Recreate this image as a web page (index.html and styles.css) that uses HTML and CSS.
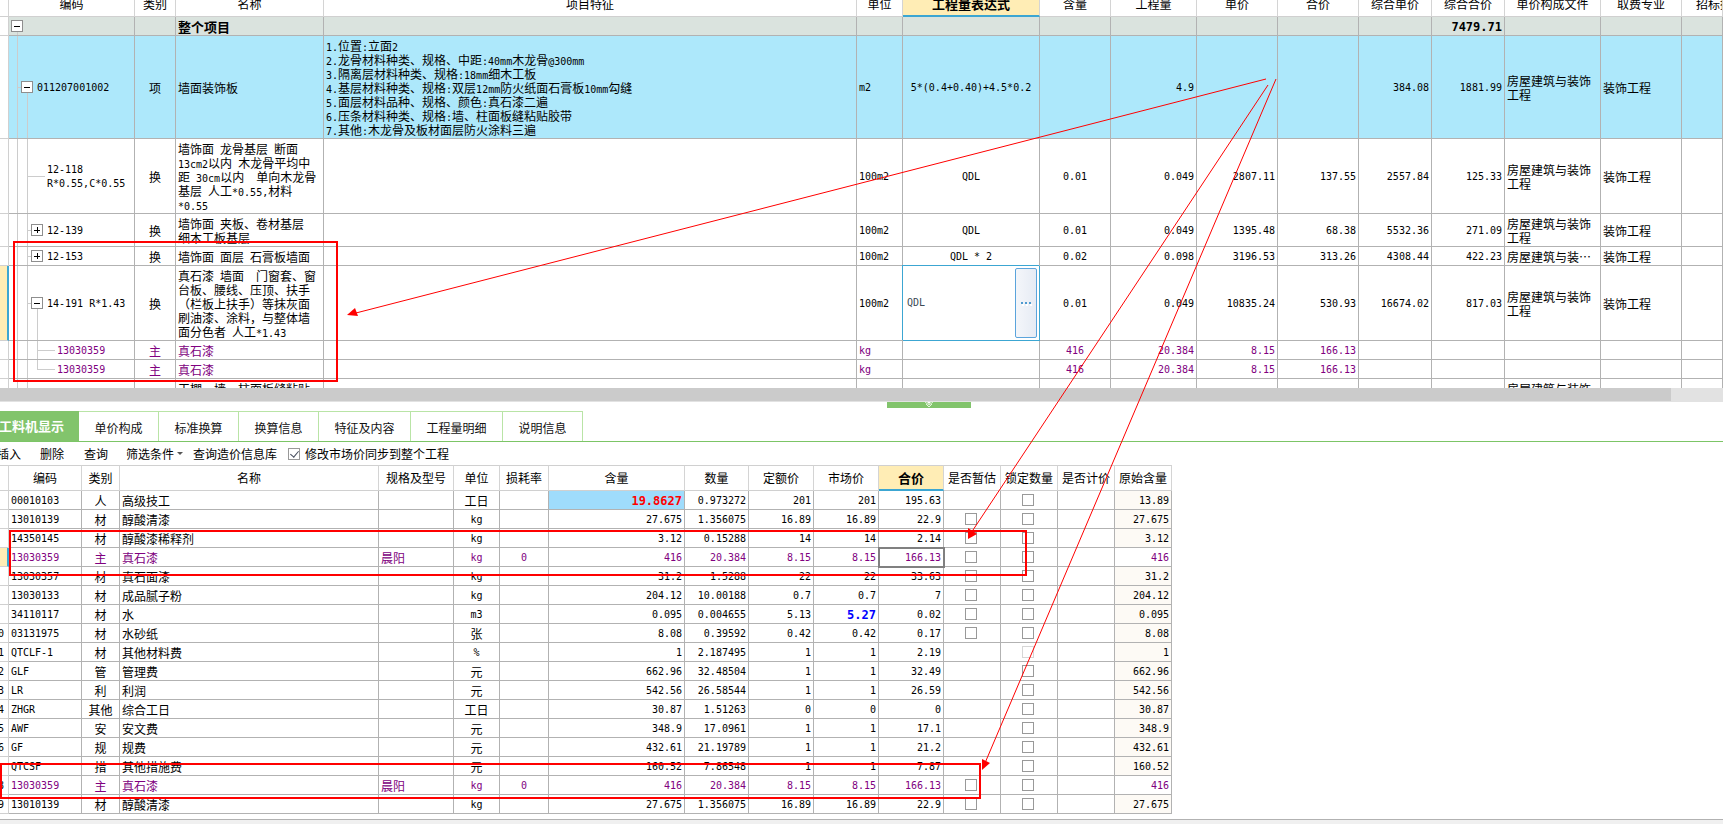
FILE: index.html
```html
<!DOCTYPE html>
<html lang="zh-CN">
<head>
<meta charset="utf-8">
<title>工料机显示</title>
<link rel="stylesheet" href="styles.css">
</head>
<body>
<main class="page">
<section class="bill-pane">
<table class="grid bill">
<colgroup><col class="b0"><col class="b1"><col class="b2"><col class="b3"><col class="b4"><col class="b5"><col class="b6"><col class="b7"><col class="b8"><col class="b9"><col class="b9"><col class="b10"><col class="b10"><col class="b11"><col class="b9"><col></colgroup>
<thead><tr><th></th><th>编码</th><th>类别</th><th>名称</th><th>项目特征</th><th>单位</th><th class="active">工程量表达式</th><th>含量</th><th>工程量</th><th>单价</th><th>合价</th><th>综合单价</th><th>综合合价</th><th>单价构成文件</th><th>取费专业</th><th class="cut">招标控制价</th></tr></thead>
<tbody>
<tr class="h-line total"><td></td><td class="tree root"><button class="toggle minus" aria-label="折叠"></button></td><td></td><td class="c">整个项目</td><td></td><td></td><td></td><td></td><td></td><td></td><td></td><td></td><td>7479.71</td><td></td><td></td><td></td></tr>
<tr class="h-item item"><td></td><td class="tree lv1"><button class="toggle minus" aria-label="折叠"></button><span>011207001002</span></td><td class="c">项</td><td class="c">墙面装饰板</td><td class="c"><span class="n">1.</span>位置<span class="n">:</span>立面<span class="n">2</span><br><span class="n">2.</span>龙骨材料种类、规格、中距<span class="n">:40mm</span>木龙骨<span class="n">@300mm</span><br><span class="n">3.</span>隔离层材料种类、规格<span class="n">:18mm</span>细木工板<br><span class="n">4.</span>基层材料种类、规格<span class="n">:</span>双层<span class="n">12mm</span>防火纸面石膏板<span class="n">10mm</span>勾缝<br><span class="n">5.</span>面层材料品种、规格、颜色<span class="n">:</span>真石漆二遍<br><span class="n">6.</span>压条材料种类、规格<span class="n">:</span>墙、柱面板缝粘贴胶带<br><span class="n">7.</span>其他<span class="n">:</span>木龙骨及板材面层防火涂料三遍</td><td>m2</td><td>5*(0.4+0.40)+4.5*0.2</td><td></td><td>4.9</td><td></td><td></td><td>384.08</td><td>1881.99</td><td class="c">房屋建筑与装饰<br>工程</td><td class="c">装饰工程</td><td></td></tr>
<tr class="h-tall"><td></td><td class="tree lv2 leaf"><span>12-118<br>R*0.55,C*0.55</span></td><td class="c">换</td><td class="c">墙饰面<span class="n"> </span>龙骨基层<span class="n"> </span>断面<br><span class="n">13cm2</span>以内<span class="n"> </span>木龙骨平均中<br>距<span class="n"> 30cm</span>以内<span class="n">&nbsp; </span>单向木龙骨<br>基层<span class="n"> </span>人工<span class="n">*0.55,</span>材料<br><span class="n">*0.55</span></td><td></td><td>100m2</td><td>QDL</td><td>0.01</td><td>0.049</td><td>2807.11</td><td>137.55</td><td>2557.84</td><td>125.33</td><td class="c">房屋建筑与装饰<br>工程</td><td class="c">装饰工程</td><td></td></tr>
<tr class="h-two"><td></td><td class="tree lv2"><button class="toggle plus" aria-label="展开"></button><span>12-139</span></td><td class="c">换</td><td class="c">墙饰面<span class="n"> </span>夹板、卷材基层<br>细木工板基层</td><td></td><td>100m2</td><td>QDL</td><td>0.01</td><td>0.049</td><td>1395.48</td><td>68.38</td><td>5532.36</td><td>271.09</td><td class="c">房屋建筑与装饰<br>工程</td><td class="c">装饰工程</td><td></td></tr>
<tr class="h-line"><td></td><td class="tree lv2"><button class="toggle plus" aria-label="展开"></button><span>12-153</span></td><td class="c">换</td><td class="c">墙饰面<span class="n"> </span>面层<span class="n"> </span>石膏板墙面</td><td></td><td>100m2</td><td>QDL * 2</td><td>0.02</td><td>0.098</td><td>3196.53</td><td>313.26</td><td>4308.44</td><td>422.23</td><td class="c">房屋建筑与装…</td><td class="c">装饰工程</td><td></td></tr>
<tr class="h-tall current"><td></td><td class="tree lv2 open"><button class="toggle minus" aria-label="折叠"></button><span>14-191 R*1.43</span></td><td class="c">换</td><td class="c">真石漆<span class="n"> </span>墙面<span class="n">&nbsp; </span>门窗套、窗<br>台板、腰线、压顶、扶手<br>（栏板上扶手）等抹灰面<br>刷油漆、涂料，与整体墙<br>面分色者<span class="n"> </span>人工<span class="n">*1.43</span></td><td></td><td>100m2</td><td class="editing"><div class="editor"><input type="text" value="QDL" aria-label="工程量表达式"><button aria-label="编辑表达式"><i></i><i></i><i></i></button></div></td><td>0.01</td><td>0.049</td><td>10835.24</td><td>530.93</td><td>16674.02</td><td>817.03</td><td class="c">房屋建筑与装饰<br>工程</td><td class="c">装饰工程</td><td></td></tr>
<tr class="h-line main"><td></td><td class="tree lv3"><span>13030359</span></td><td class="c">主</td><td class="c">真石漆</td><td></td><td>kg</td><td></td><td>416</td><td>20.384</td><td>8.15</td><td>166.13</td><td></td><td></td><td></td><td></td><td></td></tr>
<tr class="h-line main"><td></td><td class="tree lv3 last"><span>13030359</span></td><td class="c">主</td><td class="c">真石漆</td><td></td><td>kg</td><td></td><td>416</td><td>20.384</td><td>8.15</td><td>166.13</td><td></td><td></td><td></td><td></td><td></td></tr>
<tr class="h-two"><td></td><td class="tree guides"></td><td></td><td class="c">工棚、墙、柱面板缝粘贴<br>胶带</td><td></td><td></td><td></td><td></td><td></td><td></td><td></td><td></td><td></td><td class="c">房屋建筑与装饰<br>工程</td><td></td><td></td></tr>
</tbody>
</table>
</section>
<div class="scrollbar"><div class="thumb"></div></div>
<div class="splitter"><button aria-label="收起"><svg width="10" height="6" viewBox="0 0 10 6"><path d="M1 0l4 3 4-3M2 2l3 3 3-3" fill="none" stroke="#e4f4dc" stroke-width="1"/><path d="M3 0h4l-2 2z" fill="#fff"/></svg></button></div>
<nav class="tabs"><button class="tab on">工料机显示</button><button class="tab">单价构成</button><button class="tab">标准换算</button><button class="tab">换算信息</button><button class="tab wide">特征及内容</button><button class="tab wide">工程量明细</button><button class="tab">说明信息</button></nav>
<div class="tools"><button class="first">插入</button><button class="second">删除</button><button class="third">查询</button><button class="filter">筛选条件<i class="caret"></i></button><button class="lookup">查询造价信息库</button><label><input type="checkbox" checked>修改市场价同步到整个工程</label></div>
<section class="res-pane">
<table class="grid res">
<colgroup><col class="r0"><col class="r1"><col class="r2"><col class="r3"><col class="r4"><col class="r5"><col class="r6"><col class="r7"><col class="r8"><col class="r9"><col class="r9"><col class="r9"><col class="r10"><col class="r10"><col class="r10"><col class="r10"></colgroup>
<thead><tr><th></th><th>编码</th><th>类别</th><th>名称</th><th>规格及型号</th><th>单位</th><th>损耗率</th><th>含量</th><th>数量</th><th>定额价</th><th>市场价</th><th class="active">合价</th><th>是否暂估</th><th>锁定数量</th><th>是否计价</th><th>原始含量</th></tr></thead>
<tbody>
<tr><td></td><td>00010103</td><td class="c">人</td><td class="c">高级技工</td><td></td><td class="c">工日</td><td></td><td class="changed">19.8627</td><td>0.973272</td><td>201</td><td>201</td><td>195.63</td><td></td><td><input type="checkbox" aria-label="锁定数量"></td><td></td><td>13.89</td></tr>
<tr><td></td><td>13010139</td><td class="c">材</td><td class="c">醇酸清漆</td><td></td><td>kg</td><td></td><td>27.675</td><td>1.356075</td><td>16.89</td><td>16.89</td><td>22.9</td><td><input type="checkbox" aria-label="是否暂估"></td><td><input type="checkbox" aria-label="锁定数量"></td><td></td><td>27.675</td></tr>
<tr><td></td><td>14350145</td><td class="c">材</td><td class="c">醇酸漆稀释剂</td><td></td><td>kg</td><td></td><td>3.12</td><td>0.15288</td><td>14</td><td>14</td><td>2.14</td><td><input type="checkbox" aria-label="是否暂估"></td><td><input type="checkbox" aria-label="锁定数量"></td><td></td><td>3.12</td></tr>
<tr class="main current"><td></td><td>13030359</td><td class="c">主</td><td class="c">真石漆</td><td class="c">晨阳</td><td>kg</td><td>0</td><td>416</td><td>20.384</td><td>8.15</td><td>8.15</td><td class="focus">166.13</td><td><input type="checkbox" aria-label="是否暂估"></td><td><input type="checkbox" aria-label="锁定数量"></td><td></td><td>416</td></tr>
<tr><td></td><td>13030357</td><td class="c">材</td><td class="c">真石面漆</td><td></td><td>kg</td><td></td><td>31.2</td><td>1.5288</td><td>22</td><td>22</td><td>33.63</td><td><input type="checkbox" aria-label="是否暂估"></td><td><input type="checkbox" aria-label="锁定数量"></td><td></td><td>31.2</td></tr>
<tr><td></td><td>13030133</td><td class="c">材</td><td class="c">成品腻子粉</td><td></td><td>kg</td><td></td><td>204.12</td><td>10.00188</td><td>0.7</td><td>0.7</td><td>7</td><td><input type="checkbox" aria-label="是否暂估"></td><td><input type="checkbox" aria-label="锁定数量"></td><td></td><td>204.12</td></tr>
<tr><td></td><td>34110117</td><td class="c">材</td><td class="c">水</td><td></td><td>m3</td><td></td><td>0.095</td><td>0.004655</td><td>5.13</td><td class="market">5.27</td><td>0.02</td><td><input type="checkbox" aria-label="是否暂估"></td><td><input type="checkbox" aria-label="锁定数量"></td><td></td><td>0.095</td></tr>
<tr><td>10</td><td>03131975</td><td class="c">材</td><td class="c">水砂纸</td><td></td><td class="c">张</td><td></td><td>8.08</td><td>0.39592</td><td>0.42</td><td>0.42</td><td>0.17</td><td><input type="checkbox" aria-label="是否暂估"></td><td><input type="checkbox" aria-label="锁定数量"></td><td></td><td>8.08</td></tr>
<tr><td>11</td><td>QTCLF-1</td><td class="c">材</td><td class="c">其他材料费</td><td></td><td>%</td><td></td><td>1</td><td>2.187495</td><td>1</td><td>1</td><td>2.19</td><td></td><td><input type="checkbox" aria-label="锁定数量" disabled></td><td></td><td>1</td></tr>
<tr><td>12</td><td>GLF</td><td class="c">管</td><td class="c">管理费</td><td></td><td class="c">元</td><td></td><td>662.96</td><td>32.48504</td><td>1</td><td>1</td><td>32.49</td><td></td><td><input type="checkbox" aria-label="锁定数量"></td><td></td><td>662.96</td></tr>
<tr><td>13</td><td>LR</td><td class="c">利</td><td class="c">利润</td><td></td><td class="c">元</td><td></td><td>542.56</td><td>26.58544</td><td>1</td><td>1</td><td>26.59</td><td></td><td><input type="checkbox" aria-label="锁定数量"></td><td></td><td>542.56</td></tr>
<tr><td>14</td><td>ZHGR</td><td class="c">其他</td><td class="c">综合工日</td><td></td><td class="c">工日</td><td></td><td>30.87</td><td>1.51263</td><td>0</td><td>0</td><td>0</td><td></td><td><input type="checkbox" aria-label="锁定数量"></td><td></td><td>30.87</td></tr>
<tr><td>15</td><td>AWF</td><td class="c">安</td><td class="c">安文费</td><td></td><td class="c">元</td><td></td><td>348.9</td><td>17.0961</td><td>1</td><td>1</td><td>17.1</td><td></td><td><input type="checkbox" aria-label="锁定数量"></td><td></td><td>348.9</td></tr>
<tr><td>16</td><td>GF</td><td class="c">规</td><td class="c">规费</td><td></td><td class="c">元</td><td></td><td>432.61</td><td>21.19789</td><td>1</td><td>1</td><td>21.2</td><td></td><td><input type="checkbox" aria-label="锁定数量"></td><td></td><td>432.61</td></tr>
<tr><td></td><td>QTCSF</td><td class="c">措</td><td class="c">其他措施费</td><td></td><td class="c">元</td><td></td><td>160.52</td><td>7.86548</td><td>1</td><td>1</td><td>7.87</td><td></td><td><input type="checkbox" aria-label="锁定数量"></td><td></td><td>160.52</td></tr>
<tr class="main"><td>18</td><td>13030359</td><td class="c">主</td><td class="c">真石漆</td><td class="c">晨阳</td><td>kg</td><td>0</td><td>416</td><td>20.384</td><td>8.15</td><td>8.15</td><td>166.13</td><td><input type="checkbox" aria-label="是否暂估"></td><td><input type="checkbox" aria-label="锁定数量"></td><td></td><td>416</td></tr>
<tr><td>19</td><td>13010139</td><td class="c">材</td><td class="c">醇酸清漆</td><td></td><td>kg</td><td></td><td>27.675</td><td>1.356075</td><td>16.89</td><td>16.89</td><td>22.9</td><td><input type="checkbox" aria-label="是否暂估"></td><td><input type="checkbox" aria-label="锁定数量"></td><td></td><td>27.675</td></tr>
</tbody>
</table>
</section>
<footer class="status"></footer>
<svg class="marks" width="1723" height="824" viewBox="0 0 1723 824" aria-hidden="true">
<g fill="none" stroke="#f00" stroke-width="2"><path d="M14 242H337V381H14z"/><path d="M10 531H1026V575H10z"/><path d="M1 764H980V798H1z"/></g>
<g fill="none" stroke="#f00" stroke-width="1"><path d="M1266 79L352 314"/><path d="M1268 85L971 533"/><path d="M1276 79L985 763"/></g>
<g fill="#f00"><path d="M347 315l8-7 3 8z"/><path d="M968 539v-11l9 6z"/><path d="M982 770v-11l8 4z"/></g>
</svg>
</main>
</body>
</html>
```
FILE: styles.css
```css
* { box-sizing: border-box; }
body {
  margin: 0;
  background: #fff;
  color: #000;
  font: 12px/14px "Noto Sans CJK SC", sans-serif;
}
button, input { font: inherit; color: inherit; margin: 0; padding: 0; }
button { background: none; border: 0; white-space: nowrap; }
.page { position: relative; overflow: hidden; min-height: 100vh; display: flex; flex-direction: column; }

/* shared grid */
.grid { border-collapse: separate; border-spacing: 0; table-layout: fixed; }
.grid th {
  padding: 0;
  font-weight: 400;
  white-space: nowrap;
  overflow: hidden;
  border-right: 1px solid #d4d4d4;
  border-bottom: 1px solid #d0d0d0;
}
.grid th.active {
  background: #ffedb5;
  font-size: 13px;
  font-weight: 700;
  border-bottom: 2px solid #3ca6d2;
}
.grid td {
  padding: 2px 2px 0;
  font: 10px/14px "DejaVu Sans Mono", "Noto Sans CJK SC", monospace;
  white-space: nowrap;
  overflow: hidden;
  border-right: 1px solid #b2b2b2;
  border-bottom: 1px solid #b2b2b2;
  text-align: right;
}
.grid td.c { font: 12px/14px "Noto Sans CJK SC", sans-serif; }
.grid td:first-child { border-color: #d0d0d0; }
.n { font: 10px/10px "DejaVu Sans Mono", monospace; white-space: pre; }
.grid .main td { color: #800080; }
.grid .main td:first-child { color: #000; }
.grid .current td:first-child { background: #ffedb5; border-right: 2px solid #3ca6d2; }

/* upper table */
.bill-pane { height: 388px; overflow: hidden; }
.bill { width: 100%; min-width: 1723px; margin-top: -8px; }
.b0 { width: 9px; } .b1 { width: 126px; } .b2 { width: 41px; } .b3 { width: 148px; }
.b4 { width: 533px; } .b5 { width: 46px; } .b6 { width: 137px; } .b7 { width: 71px; }
.b8 { width: 86px; } .b9 { width: 81px; } .b10 { width: 73px; } .b11 { width: 96px; }
.bill th { height: 25px; }
.bill th.cut { text-align: left; padding-left: 14px; }
.bill td:nth-child(3), .bill td:nth-child(7), .bill td:nth-child(8) { text-align: center; }
.bill td:nth-child(2), .bill td:nth-child(4), .bill td:nth-child(5), .bill td:nth-child(6),
.bill td:nth-child(14), .bill td:nth-child(15) { text-align: left; }
.h-line { height: 19px; } .h-two { height: 33px; } .h-tall { height: 75px; } .h-item { height: 103px; }
.total td:not(:first-child) { background-color: #dae3de; font-weight: 700; font-size: 12px; }
.grid .total td.c { font-size: 13px; font-weight: 700; }
.item td:not(:first-child) { background-color: #ade8fb; }

/* tree guides */
.bill .tree {
  --g: linear-gradient(#ccc, #ccc);
  background-image: var(--g), var(--g), var(--g), var(--g);
  background-repeat: no-repeat;
  background-size: 0 0;
}
.tree button, .tree span { display: inline-block; vertical-align: middle; }
.bill .root { padding-left: 2px; background-position: 8px 100%; background-size: 1px 50%, 0 0, 0 0, 0 0; }
.bill .lv1 { padding-left: 12px; background-position: 8px 0, 8px 50%, 18px 100%, 0 0; background-size: 1px 100%, 5px 1px, 1px 50%, 0 0; }
.bill .lv2 { padding-left: 22px; background-position: 8px 0, 18px 0, 18px 50%, 28px 100%; background-size: 1px 100%, 1px 100%, 5px 1px, 0 0; }
.bill .leaf { padding-left: 38px; background-size: 1px 100%, 1px 100%, 18px 1px, 0 0; }
.bill .open { background-size: 1px 100%, 1px 100%, 5px 1px, 1px 50%; }
.bill .lv3 { padding-left: 48px; background-position: 8px 0, 18px 0, 28px 50%, 28px 0; background-size: 1px 100%, 1px 100%, 18px 1px, 1px 100%; }
.bill .last { background-size: 1px 100%, 1px 100%, 18px 1px, 1px 50%; }
.bill .guides { background-position: 8px 0, 18px 0; background-size: 1px 100%, 1px 100%, 0 0, 0 0; }
.toggle {
  --k: linear-gradient(#000, #000);
  width: 12px;
  height: 12px;
  margin: 0 4px 2px 0;
  border: 1px solid #8e8e8e;
  background: var(--k) center / 6px 1px no-repeat #fff;
}
.toggle.plus { background: var(--k) center / 6px 1px no-repeat, var(--k) center / 1px 6px no-repeat, #fff; }

/* expression editor */
.bill td.editing { padding: 2px; border-color: #3ca6d2; box-shadow: -1px -1px 0 #3ca6d2; }
.editor { display: flex; height: 70px; }
.editor input { flex: 1; min-width: 0; border: 0; outline: 0; padding-left: 2px; color: #3c4b55; background: none; }
.editor button {
  display: flex;
  align-items: center;
  justify-content: center;
  gap: 2px;
  width: 22px;
  border: 1px solid #5ba4dc;
  border-radius: 2px;
  background: linear-gradient(90deg, #f4f6fa, #e6ebf4);
}
.editor i { width: 2px; height: 2px; background: #4f9bd0; box-shadow: 1px 2px 0 #fff; }

/* scrollbar and splitter */
.scrollbar { height: 14px; background: #e2e2e2; }
.thumb { width: 97%; height: 13px; background: #cbcbcb; }
.splitter { display: flex; justify-content: center; height: 9px; padding-left: 135px; }
.splitter button { display: flex; justify-content: center; width: 84px; height: 6px; background: #82c46c; }

/* tabs */
.tabs { display: flex; height: 31px; border-bottom: 1px solid #7cc566; }
.tab { width: 80px; border: 1px solid #b9e4a6; border-width: 1px 1px 0 0; padding-top: 2px; color: #111; }
.tab.wide { width: 92px; }
.tab.on { width: 79px; padding: 0 14px 2px 0; background: #82c46c; border-color: #82c46c; color: #fff; font-size: 13px; font-weight: 700; display: flex; align-items: center; justify-content: flex-end; }

/* tool row */
.tools { display: flex; align-items: center; height: 23px; }
.tools .first { margin-left: -3px; }
.tools .second { margin-left: 19px; }
.tools .third { margin-left: 20px; }
.filter { display: flex; align-items: center; gap: 3px; margin-left: 18px; }
.caret { border: 3px solid transparent; border-top-color: #555; border-bottom: 0; }
.lookup { margin-left: 10px; }
.tools label { display: flex; align-items: center; gap: 5px; margin-left: 11px; }

input[type="checkbox"] { appearance: none; display: block; width: 12px; height: 12px; margin: 0 auto; border: 1px solid #999; background: #fff; }
input[type="checkbox"]:disabled { border-color: #d6d6d6; }
input[type="checkbox"]:checked::after {
  content: "";
  display: block;
  width: 4px;
  height: 7px;
  margin: 0 auto;
  border: solid #444b5c;
  border-width: 0 1px 1px 0;
  transform: rotate(40deg);
}

/* lower table */
.res-pane { overflow: hidden; }
.res { width: 1184px; margin-left: -12px; }
.r0 { width: 21px; } .r1 { width: 73px; } .r2 { width: 38px; } .r3 { width: 259px; }
.r4 { width: 75px; } .r5 { width: 46px; } .r6 { width: 49px; } .r7 { width: 136px; }
.r8 { width: 64px; } .r9 { width: 65px; } .r10 { width: 57px; }
.res th { height: 26px; border-top: 1px solid #d0d0d0; }
.res tr td { height: 19px; }
.res td:nth-child(1), .res td:nth-child(3), .res td:nth-child(6), .res td:nth-child(7) { text-align: center; }
.res td:nth-child(2), .res td:nth-child(4), .res td:nth-child(5) { text-align: left; }
.res td:nth-child(13), .res td:nth-child(14) { padding: 0 3px 0 1px; }
.res td:last-child { background: #fdfaf5; }
.res .main td:last-child { background: #fff; }
.res td.changed { background: #9fdcfc; color: #f00; font-weight: 700; font-size: 12px; }
.res td.market { color: #00f; font-weight: 700; font-size: 12px; }
.res td.focus { outline: 2px solid #808080; outline-offset: -1px; }

.status { flex: 1; min-height: 5px; margin-top: 5px; background: #f0f0f0; border-top: 1px solid #b2b2b2; }

/* review marks drawn over both tables */
.marks { position: absolute; left: 0; top: 0; pointer-events: none; }
```
